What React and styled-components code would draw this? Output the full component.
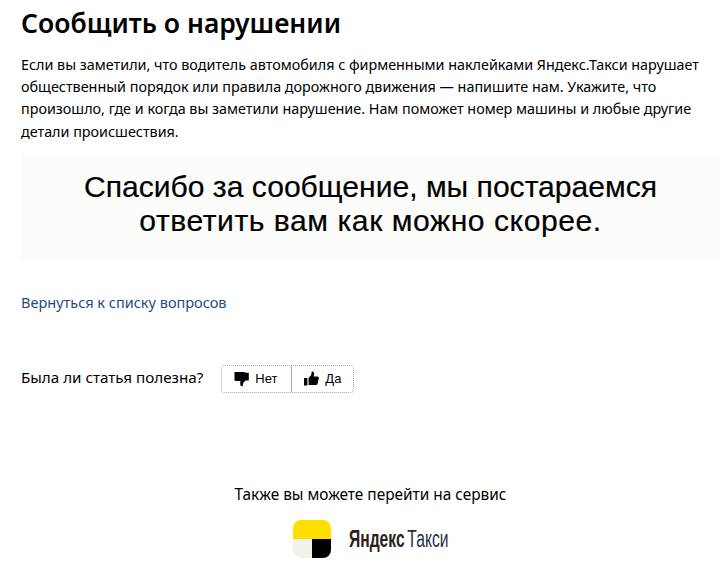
import styled, { createGlobalStyle } from 'styled-components';

const GlobalStyle = createGlobalStyle`
  html, body {
    margin: 0;
    background: #fff;
  }
`

const StyledPage = styled.div`
  width: 727px;
  height: 566px;
  overflow: hidden;
  box-sizing: border-box;
  padding: 5px 7px 0 21px;
  font-family: 'Noto Sans', sans-serif;
  color: #000;
`
const StyledTitle = styled.h1`
  margin: 0;
  font-family: 'Noto Sans', sans-serif;
  font-weight: 600;
  font-size: 26.5px;
  line-height: 36px;
`
const StyledIntro = styled.p`
  margin: 13px 0 0;
  font-size: 14.35px;
  line-height: 22.2px;
  white-space: nowrap;
`
const StyledNotice = styled.div`
  margin: 10px 0 0;
  height: 107px;
  display: flex;
  align-items: center;
  justify-content: center;
  text-align: center;
  background: #fcfcfa;
  font-family: 'Liberation Sans', Arial, sans-serif;
  font-size: 30.1px;
  line-height: 34px;
  -webkit-text-stroke: 0.2px #000;
`
const StyledNoticeText = styled.div`
  margin: 0 0 4px;
`
const StyledNoticeLine = styled.span`
  letter-spacing: ${props => props.$spacing || 0}px;
`
const StyledBackLink = styled.a`
  display: block;
  margin: 32px 0 0;
  font-size: 14.5px;
  line-height: 20px;
  color: #1f4a86;
  text-decoration: none;
`
const StyledFeedback = styled.div`
  display: flex;
  align-items: center;
  margin: 53px 0 0;
  font-size: 15.2px;
`
const StyledFeedbackLabel = styled.span`
  margin: 0 18px 4px 0;
`
const StyledVoteGroup = styled.div`
  display: flex;
  height: 28px;
  box-sizing: border-box;
  border: 1px dotted #b5a690;
  border-radius: 4px;
`
const StyledVoteButton = styled.button`
  display: flex;
  align-items: center;
  gap: 5px;
  width: ${props => props.$width}px;
  padding: 0 0 0 ${props => props.$pad}px;
  border: 0;
  border-right: ${props => props.$divider ? '1px solid #b0aaa2' : '0'};
  background: none;
  font-family: 'Liberation Sans', Arial, sans-serif;
  font-size: 13px;
  color: #000;
`
const StyledService = styled.div`
  display: flex;
  flex-direction: column;
  align-items: center;
  margin: 92px 0 0;
`
const StyledServiceLabel = styled.div`
  font-size: 15.4px;
  line-height: 20px;
`
const StyledBrand = styled.div`
  display: flex;
  align-items: center;
  gap: 18px;
  margin: 15px 0 0;
`
const StyledBrandIcon = styled.div`
  display: grid;
  grid-template-columns: 1fr 1fr;
  grid-template-rows: 1fr 1fr;
  width: 38px;
  height: 38px;
  border-radius: 8px;
  overflow: hidden;
`
const StyledBrandTop = styled.div`
  grid-column: 1 / 3;
  background: #ffdf00;
`
const StyledBrandLeft = styled.div`
  background: #f1f0ec;
`
const StyledBrandRight = styled.div`
  background: #000;
`
const StyledBrandName = styled.div`
  display: flex;
  gap: 4px;
  font-family: 'Liberation Sans', Arial, sans-serif;
  font-size: 23px;
  line-height: 28px;
  transform: scaleX(0.68);
  transform-origin: left center;
  width: 100px;
  white-space: nowrap;
`
const StyledBrandStrong = styled.span`
  font-weight: 700;
  color: #2a2118;
`
const StyledBrandLight = styled.span`
  color: #27313f;
`

const ThumbDown = () => (
  <svg width="17" height="17" viewBox="0 0 17 17">
    <path fill="#000" d="M1.5 2h9c.8 0 1.5.3 2 .8h3.3v7.7h-3.3l-2.2 2.2-.6 3.5c-1.7.2-2.7-1-2.5-2.7l.3-2.5H3c-1 0-1.7-.8-1.5-1.7z" />
  </svg>
)

const ThumbUp = () => (
  <svg width="17" height="17" viewBox="0 0 17 17">
    <path fill="#000" d="M1 8h3.4v7.5H1zM5.6 8l2.6-3 .6-3.4c1.6-.2 2.5 1 2.3 2.6l-.3 2.3h3.6c1 0 1.6.8 1.4 1.7l-1.2 5.6c-.2.7-.8 1.2-1.6 1.2H5.6z" />
  </svg>
)

const App = () => {
  return (
    <StyledPage>
      <GlobalStyle />
      <StyledTitle>Сообщить о нарушении</StyledTitle>
      <StyledIntro>
        Если вы заметили, что водитель автомобиля с фирменными наклейками Яндекс.Такси нарушает<br />
        общественный порядок или правила дорожного движения — напишите нам. Укажите, что<br />
        произошло, где и когда вы заметили нарушение. Нам поможет номер машины и любые другие<br />
        детали происшествия.
      </StyledIntro>
      <StyledNotice>
        <StyledNoticeText>
          <StyledNoticeLine>Спасибо за сообщение, мы постараемся</StyledNoticeLine><br />
          <StyledNoticeLine $spacing={0.55}>ответить вам как можно скорее.</StyledNoticeLine>
        </StyledNoticeText>
      </StyledNotice>
      <StyledBackLink href="#">Вернуться к списку вопросов</StyledBackLink>
      <StyledFeedback>
        <StyledFeedbackLabel>Была ли статья полезна?</StyledFeedbackLabel>
        <StyledVoteGroup>
          <StyledVoteButton $width={70} $pad={11} $divider>
            <ThumbDown />
            Нет
          </StyledVoteButton>
          <StyledVoteButton $width={61} $pad={11}>
            <ThumbUp />
            Да
          </StyledVoteButton>
        </StyledVoteGroup>
      </StyledFeedback>
      <StyledService>
        <StyledServiceLabel>Также вы можете перейти на сервис</StyledServiceLabel>
        <StyledBrand>
          <StyledBrandIcon>
            <StyledBrandTop />
            <StyledBrandLeft />
            <StyledBrandRight />
          </StyledBrandIcon>
          <StyledBrandName>
            <StyledBrandStrong>Яндекс</StyledBrandStrong>
            <StyledBrandLight>Такси</StyledBrandLight>
          </StyledBrandName>
        </StyledBrand>
      </StyledService>
    </StyledPage>
  );
};

export default App;
